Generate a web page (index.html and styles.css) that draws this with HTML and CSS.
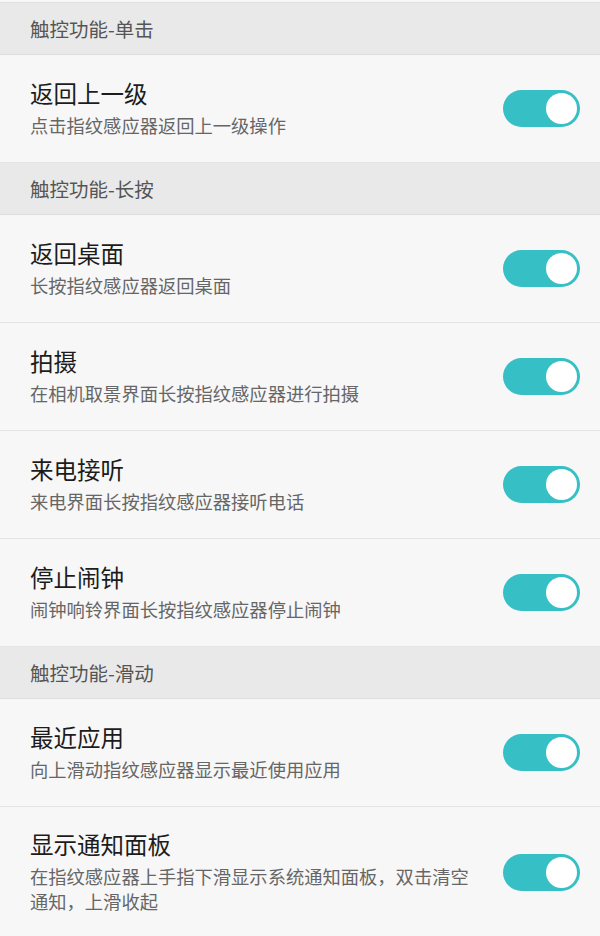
FILE: index.html
```html
<!DOCTYPE html>
<html lang="zh-CN">
<head>
<meta charset="utf-8">
<link rel="stylesheet" href="styles.css">
</head>
<body>
<div class="top"></div>

<div class="header">触控功能-单击</div>
<div class="item last">
  <div class="text"><div class="title">返回上一级</div><div class="sub">点击指纹感应器返回上一级操作</div></div>
  <div class="switch"><div class="knob"></div></div>
</div>

<div class="header">触控功能-长按</div>
<div class="item">
  <div class="text"><div class="title">返回桌面</div><div class="sub">长按指纹感应器返回桌面</div></div>
  <div class="switch"><div class="knob"></div></div>
</div>
<div class="item">
  <div class="text"><div class="title">拍摄</div><div class="sub">在相机取景界面长按指纹感应器进行拍摄</div></div>
  <div class="switch"><div class="knob"></div></div>
</div>
<div class="item">
  <div class="text"><div class="title">来电接听</div><div class="sub">来电界面长按指纹感应器接听电话</div></div>
  <div class="switch"><div class="knob"></div></div>
</div>
<div class="item last">
  <div class="text"><div class="title">停止闹钟</div><div class="sub">闹钟响铃界面长按指纹感应器停止闹钟</div></div>
  <div class="switch"><div class="knob"></div></div>
</div>

<div class="header">触控功能-滑动</div>
<div class="item">
  <div class="text"><div class="title">最近应用</div><div class="sub">向上滑动指纹感应器显示最近使用应用</div></div>
  <div class="switch"><div class="knob"></div></div>
</div>
<div class="item last">
  <div class="text"><div class="title">显示通知面板</div><div class="sub">在指纹感应器上手指下滑显示系统通知面板，双击清空通知，上滑收起</div></div>
  <div class="switch"><div class="knob"></div></div>
</div>
</body>
</html>
```

FILE: styles.css
```css
html, body {
  margin: 0;
  padding: 0;
  background: #f7f7f7;
  font-family: "Noto Sans CJK SC", "Noto Sans", sans-serif;
}
.top {
  height: 2px;
  border-bottom: 1px solid #e0e0e0;
}
.header {
  height: 52px;
  box-sizing: border-box;
  padding-left: 30px;
  display: flex;
  align-items: center;
  background: #e9e9e9;
  color: #555555;
  font-size: 19.5px;
  border-bottom: 1px solid #dddddd;
}
.item {
  display: flex;
  align-items: center;
  justify-content: space-between;
  padding: 0 20px 0 30px;
  min-height: 108px;
  box-sizing: border-box;
  border-bottom: 1px solid #e4e4e4;
}
.text {
  max-width: 445px;
  padding: 22px 0 24px;
}
.title {
  font-size: 23.5px;
  line-height: 30px;
  color: #1c1c1c;
}
.sub {
  margin-top: 5px;
  font-size: 18.3px;
  line-height: 25px;
  color: #666666;
}
.switch {
  flex: none;
  width: 77px;
  height: 37px;
  border-radius: 19px;
  background: #36bfc4;
  display: flex;
  align-items: center;
  justify-content: flex-end;
  padding-right: 3px;
  box-sizing: border-box;
}
.knob {
  width: 31px;
  height: 31px;
  border-radius: 50%;
  background: #ffffff;
}
```
